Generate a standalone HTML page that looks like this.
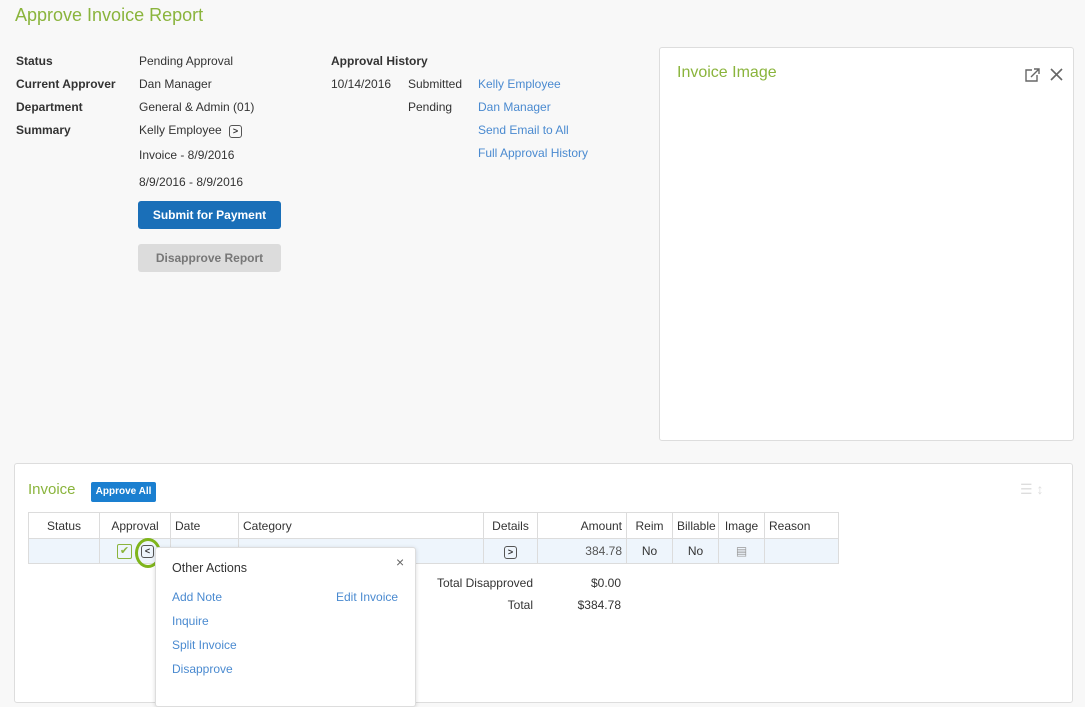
<!DOCTYPE html>
<html><head><style>
*{box-sizing:border-box;margin:0;padding:0}
body{width:1085px;height:691px;overflow:hidden;background:#f8f8f8;font-family:"Liberation Sans",sans-serif;font-size:12px;color:#333;position:relative}
.a{position:absolute;white-space:nowrap}
.g{color:#8ab43c}
.l{color:#4a8ad0}
.b{font-weight:bold}
table{border-collapse:collapse;position:absolute;left:28px;top:512px;font-size:12px;table-layout:fixed;width:810px}
td{border:1px solid #dcdcdc;height:26px;padding:0 4px;overflow:hidden;white-space:nowrap}
tr.r td{background:#eef5fc;height:25px}
.ic{display:inline-block;width:13px;height:13px;border:1.5px solid #555;border-radius:3px;font-size:9px;line-height:10px;text-align:center;font-weight:bold}
</style></head><body>
<div class="a g" style="left:15px;top:5px;font-size:18px">Approve Invoice Report</div>
<div class="a b" style="left:16px;top:54px">Status</div>
<div class="a b" style="left:16px;top:77px">Current Approver</div>
<div class="a b" style="left:16px;top:100px">Department</div>
<div class="a b" style="left:16px;top:123px">Summary</div>
<div class="a" style="left:139px;top:54px">Pending Approval</div>
<div class="a" style="left:139px;top:77px">Dan Manager</div>
<div class="a" style="left:139px;top:100px">General &amp; Admin (01)</div>
<div class="a" style="left:139px;top:123px">Kelly Employee <span class="ic" style="margin-left:4px">&gt;</span></div>
<div class="a" style="left:139px;top:148px">Invoice - 8/9/2016</div>
<div class="a" style="left:139px;top:175px">8/9/2016 - 8/9/2016</div>
<div class="a b" style="left:138px;top:201px;width:143px;height:28px;background:#1a6fb8;color:#fff;border-radius:3px;text-align:center;line-height:28px">Submit for Payment</div>
<div class="a b" style="left:138px;top:244px;width:143px;height:28px;background:#dcdcdc;color:#777;border-radius:3px;text-align:center;line-height:28px">Disapprove Report</div>
<div class="a b" style="left:331px;top:54px">Approval History</div>
<div class="a" style="left:331px;top:77px">10/14/2016</div>
<div class="a" style="left:408px;top:77px">Submitted</div>
<div class="a" style="left:408px;top:100px">Pending</div>
<div class="a l" style="left:478px;top:77px">Kelly Employee</div>
<div class="a l" style="left:478px;top:100px">Dan Manager</div>
<div class="a l" style="left:478px;top:123px">Send Email to All</div>
<div class="a l" style="left:478px;top:146px">Full Approval History</div>
<div class="a" style="left:659px;top:47px;width:415px;height:394px;background:#fff;border:1px solid #ddd;border-radius:3px"></div>
<div class="a g" style="left:677px;top:64px;font-size:16px">Invoice Image</div>
<svg class="a" style="left:1024px;top:67px" width="48" height="16"><path d="M8 3H2v11h11V8M10 2h5v5M15 2L7 10" stroke="#666" stroke-width="1.4" fill="none"/><path d="M27 2l11 11M38 2L27 13" stroke="#666" stroke-width="1.6"/></svg>
<div class="a" style="left:14px;top:463px;width:1059px;height:240px;background:#fff;border:1px solid #ddd;border-radius:3px"></div>
<div class="a g" style="left:28px;top:481px;font-size:15px">Invoice</div>
<div class="a b" style="left:91px;top:482px;width:65px;height:20px;background:#1a7fd0;color:#fff;border-radius:2px;font-size:10px;text-align:center;line-height:20px">Approve All</div>
<div class="a" style="left:1020px;top:481px;color:#ddd;font-size:14px">☰ ↕</div>
<table>
<colgroup><col style="width:71px"><col style="width:71px"><col style="width:68px"><col style="width:245px"><col style="width:54px"><col style="width:89px"><col style="width:46px"><col style="width:46px"><col style="width:46px"><col style="width:74px"></colgroup>
<tr><td style="text-align:center">Status</td><td style="text-align:center">Approval</td><td>Date</td><td>Category</td><td style="text-align:center">Details</td><td style="text-align:right">Amount</td><td style="text-align:center">Reim</td><td style="text-align:center">Billable</td><td style="text-align:center">Image</td><td>Reason</td></tr>
<tr class="r"><td></td><td></td><td></td><td></td><td style="text-align:center"><span class="ic">&gt;</span></td><td style="text-align:right;color:#555">384.78</td><td style="text-align:center">No</td><td style="text-align:center">No</td><td style="text-align:center;color:#999">▤</td><td></td></tr>
</table>
<div class="a" style="left:117px;top:544px;width:15px;height:15px;border:1.5px solid #8ab43c;border-radius:2px;color:#8ab43c;font-size:11px;line-height:12px;text-align:center">✔</div>
<div class="a" style="left:135px;top:538px;width:26px;height:30px;border:3px solid #7fb51c;border-radius:50%"></div>
<div class="a ic" style="left:141px;top:545px">&lt;</div>
<div class="a" style="left:155px;top:547px;width:261px;height:160px;background:#fff;border:1px solid #ddd;border-radius:3px;box-shadow:0 1px 4px rgba(0,0,0,.15)"></div>
<div class="a" style="left:172px;top:561px;font-size:12.5px">Other Actions</div>
<div class="a" style="left:396px;top:554px;font-size:14px;color:#666">×</div>
<div class="a l" style="left:172px;top:590px">Add Note</div>
<div class="a l" style="left:336px;top:590px">Edit Invoice</div>
<div class="a l" style="left:172px;top:614px">Inquire</div>
<div class="a l" style="left:172px;top:638px">Split Invoice</div>
<div class="a l" style="left:172px;top:662px">Disapprove</div>
<div class="a" style="left:420px;top:576px;width:113px;text-align:right">Total Disapproved</div>
<div class="a" style="left:420px;top:598px;width:113px;text-align:right">Total</div>
<div class="a" style="left:540px;top:576px;width:81px;text-align:right">$0.00</div>
<div class="a" style="left:540px;top:598px;width:81px;text-align:right">$384.78</div>
</body></html>
